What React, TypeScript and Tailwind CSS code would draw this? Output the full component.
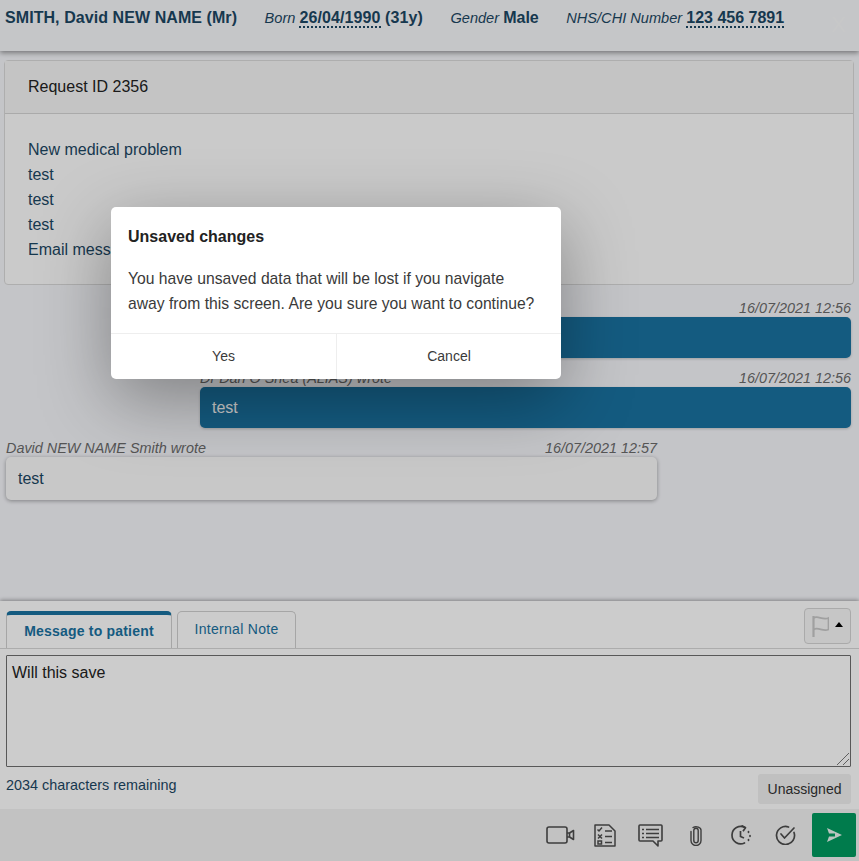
import { useState } from 'react';

const font = { fontFamily: '"Liberation Sans", Arial, sans-serif' };

function Message({ name, time, text, mine }: { name: string; time: string; text: string; mine?: boolean }) {
  return (
    <div className={mine ? 'ml-[200px] mr-2' : 'ml-[6px] w-[651px]'}>
      <div className="flex h-[18px] justify-between text-[14.4px] italic leading-[18px] text-[#6b6b6b]">
        <span>{name}</span>
        <span>{time}</span>
      </div>
      <div
        className={
          mine
            ? 'h-[41px] rounded-[5px] bg-[#1a72a1] px-3 text-[16px] leading-[41px] text-white shadow-[0_1px_3px_rgba(0,0,0,.2)]'
            : 'h-[43px] rounded-[5px] bg-[#fbfbfb] px-3 text-[16px] leading-[43px] text-[#1c4763] shadow-[0_1px_4px_rgba(0,0,0,.35)]'
        }
      >
        {text}
      </div>
    </div>
  );
}

function ToolbarIcons() {
  return (
    <>
      <svg className="ml-0" width="29" height="18" viewBox="0 0 29 18" fill="none" stroke="#4d4d4d" strokeWidth="1.6">
        <rect x="1" y="1" width="20" height="16" rx="2" />
        <path d="M21 7h2.500l4-2.500v9l-4-2.500H21" strokeLinejoin="round" />
        <path d="M23.500 7v4" />
      </svg>
      <svg className="ml-[19px]" width="22" height="23" viewBox="0 0 22 23" fill="none" stroke="#4d4d4d" strokeWidth="1.500">
        <path d="M1 1h14l6 6v15H1z" strokeLinejoin="round" />
        <path d="M3.500 5.500l1.500 1.500 3-3.500" />
        <path d="M4 10.500l4 4M8 10.500l-4 4" />
        <path d="M4 17h3.500v3H4z" />
        <path d="M11 7h7M11 12.500h7M11 18.500h7" />
      </svg>
      <svg className="ml-[22px]" width="25" height="23" viewBox="0 0 25 23" fill="none" stroke="#4d4d4d" strokeWidth="1.600">
        <path d="M2 1h21a1 1 0 0 1 1 1v14a1 1 0 0 1-1 1h-3v5l-5-5H2a1 1 0 0 1-1-1V2a1 1 0 0 1 1-1z" strokeLinejoin="round" />
        <path d="M4 5.500h2M8 5.500h13M4 9.500h2M8 9.500h13M4 13.500h2M8 13.500h13" />
      </svg>
      <svg className="ml-[27px]" width="12" height="21" viewBox="0 0 12 21" fill="none" stroke="#4d4d4d" strokeWidth="1.400">
        <path d="M3.800 15.500V5.500a2.200 2.200 0 0 1 4.400 0v10" strokeLinecap="round" />
        <path d="M1 6.500v9a5 5 0 0 0 10 0v-10a5 3.500 0 0 0-8-3" strokeLinecap="round" />
        <path d="M8.200 15.500a2.200 2.200 0 0 1-4.400 0" />
      </svg>
      <svg className="ml-[29px]" width="21" height="20" viewBox="0 0 21 20" fill="none" stroke="#4d4d4d" strokeWidth="1.700">
        <path d="M14 2.600A8.700 8.700 0 1 0 13.500 18" strokeLinecap="round" />
        <path d="M10.500 0.500l4 2.200-2.500 3.500" strokeLinejoin="round" />
        <path d="M9.500 6v5.500l3.500 1.500" />
        <path d="M17.500 6.500v.8M19 10.500v.8M17.500 14.500v.8" strokeLinecap="round" />
      </svg>
      <svg className="ml-[23px]" width="21" height="20" viewBox="0 0 21 20" fill="none" stroke="#4d4d4d" strokeWidth="1.700">
        <path d="M19 7.500A9 9 0 1 1 13.500 2" strokeLinecap="round" />
        <path d="M6 9l3.500 4 9.500-10" strokeLinecap="round" strokeLinejoin="round" />
      </svg>
    </>
  );
}

export default function App() {
  const [draft, setDraft] = useState('Will this save');

  return (
    <div className="relative flex h-[861px] w-full flex-col overflow-hidden bg-[#f6f7fb]" style={font}>
      <header className="flex h-[51px] shrink-0 items-start gap-[27.5px] bg-[#f7f8fa] pl-[5px] pt-[8px] text-[#1c4763] shadow-[0_2px_5px_rgba(0,0,0,.4)]">
        <b className="text-[16px] leading-[20px] tracking-[0.07px]">SMITH, David NEW NAME (Mr)</b>
        <span className="text-[14.6px] leading-[20px]">
          <i>Born </i>
          <b className="border-b-2 border-dotted border-[#1c4763] text-[16px] tracking-[0.1px]">26/04/1990</b>
          <b className="text-[16px] tracking-[0.1px]"> (31y)</b>
        </span>
        <span className="text-[14.6px] leading-[20px]">
          <i>Gender </i>
          <b className="text-[16px]">Male</b>
        </span>
        <span className="text-[14.6px] leading-[20px]">
          <i>NHS/CHI Number </i>
          <b className="border-b-2 border-dotted border-[#1c4763] text-[16px]">123 456 7891</b>
        </span>
        <span className="ml-auto mr-[13px] mt-[2px] text-[22px] leading-[30px] text-[#ffffff50]">X</span>
      </header>

      <section className="ml-[4px] mr-[5px] mt-[9px] h-[225px] shrink-0 rounded-[4px] border border-[#dadada] bg-[#fdfdfd]">
        <div className="h-[53px] border-b border-[#d5d5d5] bg-[#f6f6f6] pl-[23px] text-[16px] leading-[52px] text-[#222]">
          Request ID 2356
        </div>
        <div className="pl-[23px] pt-[23px] text-[16px] leading-[25px] text-[#1c4763]">
          <p>New medical problem</p>
          <p>test</p>
          <p>test</p>
          <p>test</p>
          <p>Email message</p>
        </div>
      </section>

      <div className="mt-[14px] flex shrink-0 flex-col gap-[11px]">
        <div className="flex flex-col gap-[11px]">
          <Message mine name="Dr Dan O Shea (ALIAS) wrote" time="16/07/2021 12:56" text="test" />
          <Message mine name="Dr Dan O Shea (ALIAS) wrote" time="16/07/2021 12:56" text="test" />
        </div>
        <Message name="David NEW NAME Smith wrote" time="16/07/2021 12:57" text="test" />
      </div>

      <div className="flex-1" />

      <section className="shrink-0 bg-white shadow-[0_-1px_4px_rgba(0,0,0,.35)]">
        <div className="flex h-[48px] items-end border-b border-[#d8d8d8] pl-[6px] pr-2">
          <div className="mr-[5px] h-[37px] w-[166px] rounded-t-[5px] border-x border-t-[4px] border-[#d0d0d0] border-t-[#1a72a1] text-center text-[14px] font-bold leading-[32px] tracking-[0.2px] text-[#1a72a1]">
            Message to patient
          </div>
          <div className="h-[37px] w-[119px] rounded-t-[5px] border-x border-t border-[#d0d0d0] text-center text-[14px] leading-[34px] tracking-[0.3px] text-[#1a72a1]">
            Internal Note
          </div>
          <button className="mb-[4px] ml-auto flex h-[36px] w-[47px] items-center justify-center gap-[6px] rounded-[4px] border border-[#d5d5d5] bg-[#f8f8f8]">
            <svg width="17" height="22" viewBox="0 0 17 22" fill="none" stroke="#c8c8c8" strokeWidth="1.700">
              <path d="M1.500 1v21" strokeWidth="2.200" />
              <path d="M1.500 3c4-3 9 2.500 15 0v11.500c-6 2.500-10-3-15 0" />
            </svg>
            <span className="mb-[3px] h-0 w-0 border-x-[4.5px] border-b-[5px] border-x-transparent border-b-black" />
          </button>
        </div>

        <div className="relative ml-[6px] mr-2 mt-[6px]">
          <textarea
            value={draft}
            onChange={(e) => setDraft(e.target.value)}
            className="block h-[112px] w-full resize-none rounded-[1px] border border-[#6f6f6f] bg-white px-[5px] py-[6px] text-[16px] leading-[21px] text-[#222] outline-none"
          />
          {/* resize grip */}
          <svg className="absolute bottom-[2px] right-[2px]" width="12" height="12" viewBox="0 0 12 12" stroke="#777" strokeWidth="1">
            <path d="M0 12L12 0M6 12l6-6" />
          </svg>
        </div>

        <div className="flex h-[42px] items-start justify-between pl-[6px] pr-2">
          <span className="mt-[10px] text-[14.4px] leading-[16px] text-[#1c4763]">2034 characters remaining</span>
          <span className="mt-[7px] h-[30px] w-[93px] rounded-[3px] bg-[#f0f0f0] text-center text-[14px] leading-[30px] text-[#333]">
            Unassigned
          </span>
        </div>

        <div className="flex h-[52px] items-center justify-end bg-[#f3f3f3] pr-[3px]">
          <ToolbarIcons />
          <button className="ml-[16px] flex h-[44px] w-[44px] items-center justify-center rounded-[2px] bg-[#009a5f]">
            <svg width="15" height="14" viewBox="0 0 15 14" fill="#e8f6f0">
              <path d="M0 0l15 7-15 7 2-5.500h6v-3H2z" />
            </svg>
          </button>
        </div>
      </section>

      {/* modal backdrop */}
      <div className="absolute inset-0 bg-black/20" />

      <div className="absolute left-[111px] top-[207px] w-[450px] overflow-hidden rounded-[5px] bg-white text-[#3a3a3a] shadow-[0_20px_70px_rgba(0,0,0,.35)]">
        <div className="px-[17px] pb-[17px] pt-[20px]">
          <h2 className="text-[16px] font-bold leading-[20px] text-[#222]">Unsaved changes</h2>
          <p className="mt-[19px] text-[15.7px] leading-[25px]">
            You have unsaved data that will be lost if you navigate away from this screen. Are you sure you want to continue?
          </p>
        </div>
        <div className="flex h-[46px] border-t border-[#eeeeee] text-[14px] leading-[45px]">
          <button className="w-[226px] border-r border-[#eeeeee]">Yes</button>
          <button className="flex-1">Cancel</button>
        </div>
      </div>
    </div>
  );
}
